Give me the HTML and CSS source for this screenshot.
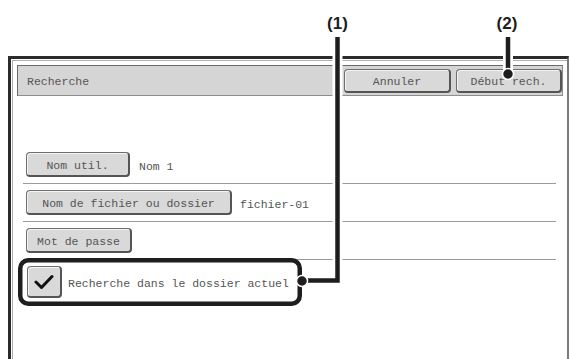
FILE: index.html
```html
<!DOCTYPE html>
<html lang="fr">
<head>
<meta charset="utf-8">
<title>Recherche</title>
<link rel="stylesheet" href="styles.css">
</head>
<body>
<div class="frame">
  <div class="header">
    <span class="title">Recherche</span>
    <div class="actions">
      <button class="btn btn-cancel">Annuler</button>
      <button class="btn btn-start">Début rech.</button>
    </div>
  </div>
  <div class="list">
    <div class="row">
      <button class="btn btn-user">Nom util.</button>
      <span class="value">Nom 1</span>
    </div>
    <div class="row">
      <button class="btn btn-file">Nom de fichier ou dossier</button>
      <span class="value">fichier-01</span>
    </div>
    <div class="row">
      <button class="btn btn-pass">Mot de passe</button>
    </div>
    <div class="row row-check">
      <button class="btn check">
        <svg width="20" height="16" viewBox="0 0 20 16"><path d="M2 8 L7.5 13.5 L18 2.5" fill="none" stroke="#111" stroke-width="3" stroke-linecap="round" stroke-linejoin="round"/></svg>
      </button>
      <span class="value check-label">Recherche dans le dossier actuel</span>
    </div>
  </div>
</div>
<svg class="callouts" width="570" height="359" viewBox="0 0 570 359">
  <g fill="none" stroke="#fff" stroke-width="10" stroke-linecap="round" stroke-linejoin="round">
    <path d="M337.5 38 V280.5 H302"/>
    <path d="M508 38 V75"/>
  </g>
  <g fill="none" stroke="#1e1e1e" stroke-width="4.5" stroke-linejoin="miter">
    <path d="M337.5 37 V280.5 H302"/>
    <path d="M508 37 V75"/>
    <rect x="20.25" y="260.25" width="279.5" height="43.5" rx="8" ry="8"/>
  </g>
  <circle cx="302" cy="281" r="5.5" fill="#1e1e1e" stroke="#fff" stroke-width="1.5"/>
  <circle cx="508" cy="74" r="5.5" fill="#1e1e1e" stroke="#fff" stroke-width="1.5"/>
  <text x="337.5" y="28.5" class="label">(1)</text>
  <text x="507" y="28.5" class="label">(2)</text>
</svg>
</body>
</html>
```

FILE: styles.css
```css
html, body {
  margin: 0;
  padding: 0;
  background: #fff;
  width: 570px;
  height: 359px;
  overflow: hidden;
  position: relative;
}

body {
  font-family: "Liberation Mono", "DejaVu Sans Mono", monospace;
  font-size: 11.5px;
  color: #555;
}

.frame {
  box-sizing: border-box;
  margin: 56px 0 0 8px;
  width: 561px;
  height: 303px;
  border-top: 3px solid #2b2b2b;
  border-left: 3px solid #2b2b2b;
  border-right: 2px solid #7a7a7a;
  box-shadow: inset 1px 1px 0 #fff, inset 2px 2px 0 #b0b0b0;
  padding: 6px 4px 0 6px;
  display: flex;
  flex-direction: column;
}

.header {
  box-sizing: border-box;
  height: 31px;
  background: #d5d5d5;
  border: 1px solid #8c8c8c;
  border-top-color: #6a6a6a;
  border-left-color: #6a6a6a;
  display: flex;
  align-items: center;
  justify-content: space-between;
  padding: 0 0 0 9px;
}

.title { padding-top: 2px; }

.actions {
  display: flex;
  gap: 5px;
  align-items: center;
}

.btn {
  box-sizing: border-box;
  font-family: inherit;
  font-size: 11.5px;
  color: #555;
  background: #d9d9d9;
  border: 1px solid #6e6e6e;
  border-right: 2px solid #555;
  border-bottom: 2px solid #555;
  border-radius: 4px;
  box-shadow: inset 1px 1px 0 #f4f4f4;
  height: 25px;
  padding: 3px 0 0;
  margin: 0;
  display: flex;
  align-items: center;
  justify-content: center;
  line-height: 14px;
}

.btn-cancel { width: 107px; height: 24px; }
.btn-start { width: 106px; height: 24px; }

.list {
  margin: 50px 7px 0 6px;
  display: flex;
  flex-direction: column;
}

.row {
  display: flex;
  align-items: center;
  padding: 6px 0 6px 3px;
  border-bottom: 1px solid #9a9a9a;
}

.row-check {
  border-bottom: none;
  padding: 6px 0 6px 4px;
}

.btn-user { width: 104px; }
.btn-file { width: 206px; }
.btn-pass { width: 106px; }

.value {
  margin-left: 9px;
  padding-top: 4px;
  line-height: 14px;
}

.btn-file + .value { margin-left: 8px; }

.check {
  width: 35px;
  height: 32px;
  padding: 0;
}

.check svg { display: block; }

.check-label { margin-left: 6px; }

.callouts {
  position: absolute;
  left: 0;
  top: 0;
}

.label {
  font-family: "Liberation Sans", Arial, sans-serif;
  font-weight: bold;
  font-size: 17px;
  fill: #1e1e1e;
  text-anchor: middle;
}
```
